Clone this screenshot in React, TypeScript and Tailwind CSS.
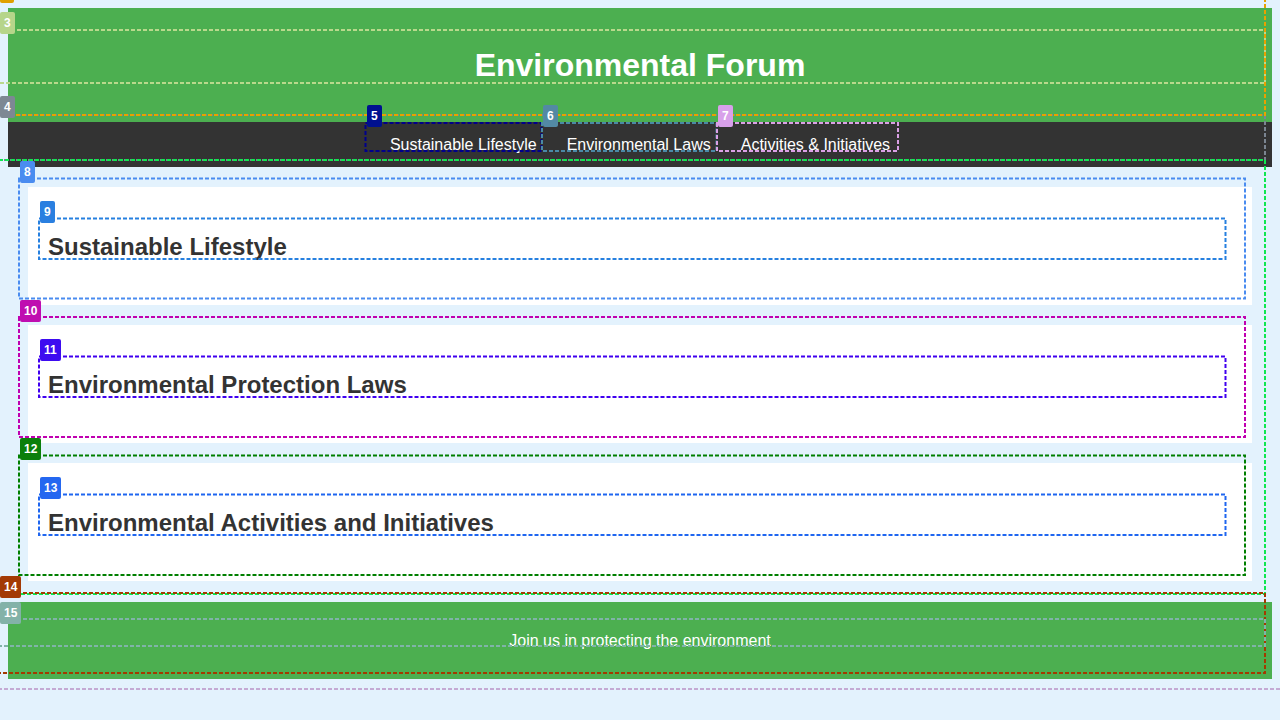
import React from "react";

type Box = { x1: number; y1: number; x2: number; y2: number; c: string };

const boxes: Box[] = [
  { x1: -1, y1: -2, x2: 1281, y2: 689, c: "#c4aad4" },
  { x1: -1, y1: 115, x2: 1265, y2: 160, c: "#7b8591" },
  { x1: -1, y1: 30, x2: 1265, y2: 83, c: "#b9d98c" },
  { x1: -1, y1: -2, x2: 1265, y2: 115, c: "#e8a100" },
  { x1: 365.5, y1: 123, x2: 541.5, y2: 151, c: "#00008b" },
  { x1: 542, y1: 123, x2: 716.5, y2: 151, c: "#4a89a6" },
  { x1: 717, y1: 123, x2: 898, y2: 151, c: "#dba0e6" },
  { x1: -1, y1: 160, x2: 1265, y2: 594, c: "#10e650" },
  { x1: 19, y1: 178.5, x2: 1245, y2: 298.5, c: "#4a8cf0" },
  { x1: 39, y1: 218.5, x2: 1225.5, y2: 259, c: "#2680e0" },
  { x1: 19, y1: 317, x2: 1245, y2: 437, c: "#c000b0" },
  { x1: 39, y1: 356.5, x2: 1225.5, y2: 397, c: "#4000f0" },
  { x1: 19, y1: 455.5, x2: 1245, y2: 575, c: "#007f00" },
  { x1: 39, y1: 494.5, x2: 1225.5, y2: 535, c: "#1f66f0" },
  { x1: -1, y1: 593, x2: 1265, y2: 673, c: "#a33a00" },
  { x1: -1, y1: 619, x2: 1265, y2: 646, c: "#80b3a8" },
];

const sections = [
  "Sustainable Lifestyle",
  "Environmental Protection Laws",
  "Environmental Activities and Initiatives",
];

const links = ["Sustainable Lifestyle", "Environmental Laws", "Activities & Initiatives"];

const lbl =
  "absolute h-[22px] rounded-[2px] px-[4px] text-[12px] font-bold leading-[22px] text-white";

export default function App() {
  return (
    <div className="relative min-h-[720px] bg-[#e3f2fd] p-2 font-['Liberation_Sans',Arial,sans-serif]">
      <header className="flex h-[114px] items-center justify-center bg-[#4caf50]">
        <h1 className="text-[32px] font-bold leading-[53px] text-white">Environmental Forum</h1>
      </header>
      <nav className="flex h-[45px] items-center justify-center bg-[#333333]">
        {links.map((l) => (
          <a key={l} className="px-[15px] text-[16px] leading-[18px] text-white">
            {l}
          </a>
        ))}
      </nav>
      <main className="flex flex-col gap-5 px-5 pb-[21px] pt-5">
        {sections.map((s) => (
          <section key={s} className="h-[118px] bg-white px-5 pt-[46px]">
            <h2 className="text-[24px] font-bold leading-[28px] text-[#333333]">{s}</h2>
          </section>
        ))}
      </main>
      <footer className="flex h-[77px] items-center justify-center bg-[#4caf50]">
        <p className="text-[16px] leading-[18px] text-white">Join us in protecting the environment</p>
      </footer>

      <svg className="pointer-events-none absolute left-0 top-0" width={1280} height={720}>
        {boxes.map((b, i) => (
          <rect
            key={i}
            x={b.x1}
            y={b.y1}
            width={b.x2 - b.x1}
            height={b.y2 - b.y1}
            fill="none"
            stroke={b.c}
            strokeWidth={2}
            strokeDasharray="4 2"
          />
        ))}
      </svg>

      <div className="absolute left-0 top-0 h-[3px] w-[14px] rounded-b-[2px] bg-[#e0a000]" />
      <div className={`${lbl} left-0 top-[12px] bg-[#b6d58a]`}>3</div>
      <div className={`${lbl} left-0 top-[96px] bg-[#7d8893]`}>4</div>
      <div className={`${lbl} left-[367px] top-[105px] bg-[#00108f]`}>5</div>
      <div className={`${lbl} left-[543px] top-[105px] bg-[#5389a4]`}>6</div>
      <div className={`${lbl} left-[718px] top-[105px] bg-[#d8a0ea]`}>7</div>
      <div className={`${lbl} left-[20px] top-[161px] bg-[#4a8cf0]`}>8</div>
      <div className={`${lbl} left-[40px] top-[201px] bg-[#2a7fe0]`}>9</div>
      <div className={`${lbl} left-[20px] top-[299.5px] bg-[#bf0db0]`}>10</div>
      <div className={`${lbl} left-[40px] top-[339px] bg-[#3d0cf0]`}>11</div>
      <div className={`${lbl} left-[20px] top-[438px] bg-[#0b7f0b]`}>12</div>
      <div className={`${lbl} left-[40px] top-[477px] bg-[#2467f0]`}>13</div>
      <div className={`${lbl} left-0 top-[575.5px] bg-[#a33a05]`}>14</div>
      <div className={`${lbl} left-0 top-[601.5px] bg-[#83b2a8]`}>15</div>
    </div>
  );
}
